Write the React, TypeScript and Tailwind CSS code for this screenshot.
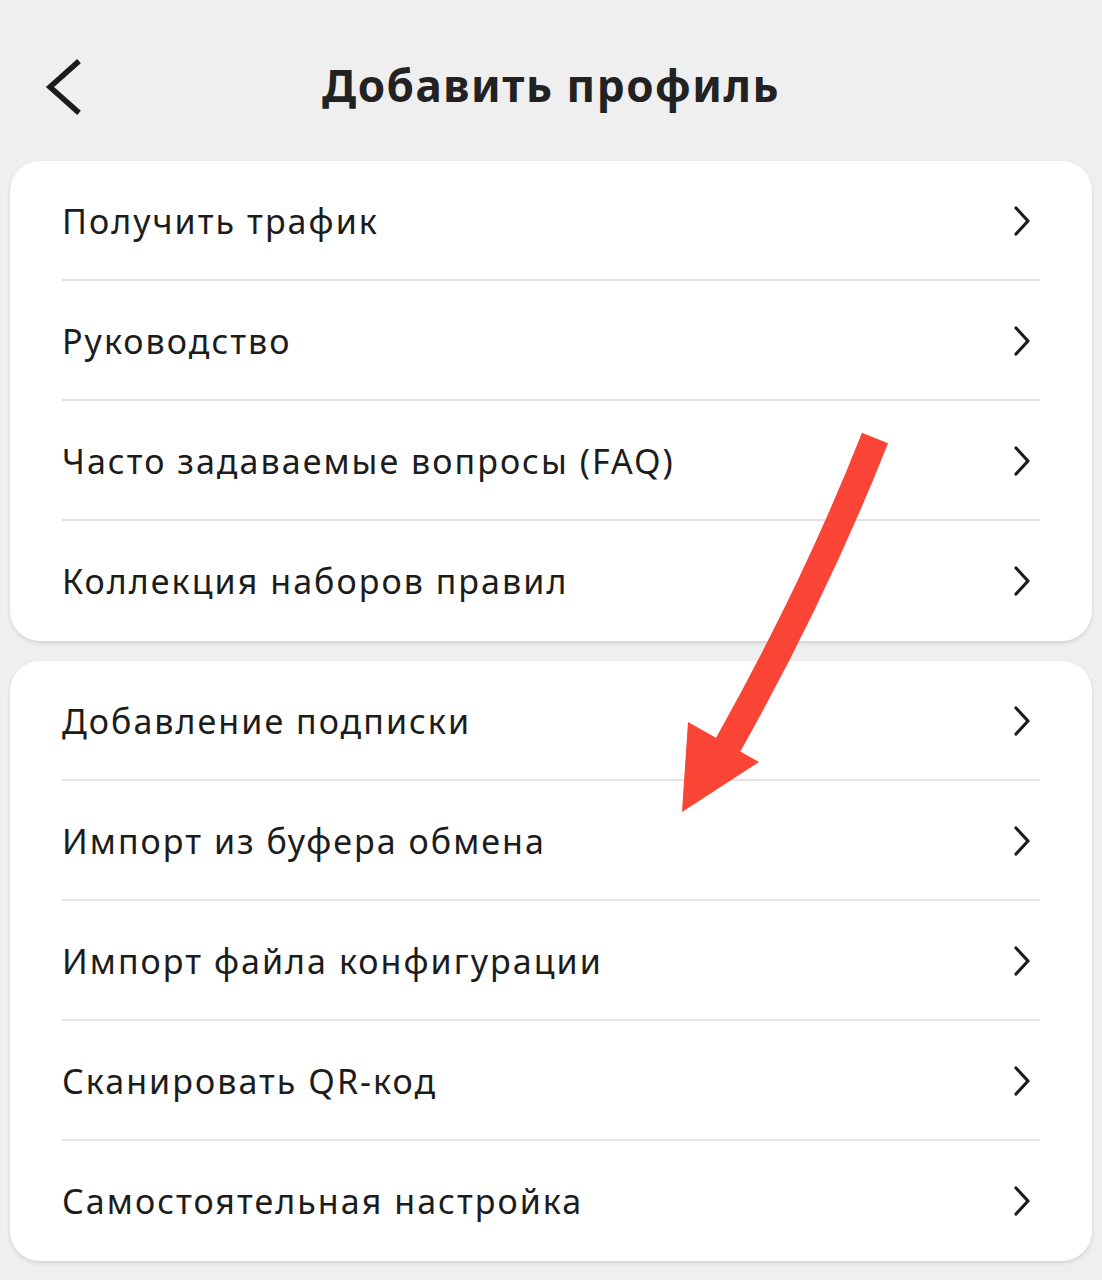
const groups = [
  ["Получить трафик", "Руководство", "Часто задаваемые вопросы (FAQ)", "Коллекция наборов правил"],
  [
    "Добавление подписки",
    "Импорт из буфера обмена",
    "Импорт файла конфигурации",
    "Сканировать QR-код",
    "Самостоятельная настройка",
  ],
]

function Chevron() {
  return (
    <svg width="20" height="32" viewBox="0 0 20 32" className="mr-[8px] shrink-0" fill="none">
      <polyline points="4,3 16,16 4,29" stroke="#1c1c1c" strokeWidth="3.2" strokeLinecap="round" strokeLinejoin="round" />
    </svg>
  )
}

function Row({ label, last }: { label: string; last: boolean }) {
  return (
    <div className="relative flex h-[120px] items-center justify-between pl-[52px] pr-[52px]">
      <span className="text-[34px] tracking-[0.06em] text-[#1c1c1c]">{label}</span>
      <Chevron />
      {!last && <div className="absolute bottom-0 left-[52px] right-[52px] h-[2px] bg-[#e3e3e3]" />}
    </div>
  )
}

export default function App() {
  return (
    <div
      className="relative min-h-[1280px] w-[1102px] bg-[#efefef] px-[10px]"
      style={{ fontFamily: '"Noto Sans", "DejaVu Sans", sans-serif' }}
    >
      <header className="relative flex h-[161px] items-start justify-center pt-[63px]">
        <button type="button" className="absolute left-[27px] top-[58px]">
          <svg width="48" height="58" viewBox="0 0 48 58" fill="none">
            <polyline points="40,5 13,29 40,53" stroke="#1c1c1c" strokeWidth="5.5" strokeLinecap="square" />
          </svg>
        </button>
        <h1 className="text-[44px] font-bold leading-none tracking-[0.035em] text-[#222]">Добавить профиль</h1>
      </header>

      <div className="flex flex-col gap-[20px]">
        {groups.map((items, gi) => (
          <div key={gi} className="overflow-hidden rounded-[30px] bg-white shadow-[0_2px_4px_rgba(0,0,0,0.12)]">
            {items.map((label, i) => (
              <Row key={label} label={label} last={i === items.length - 1} />
            ))}
          </div>
        ))}
      </div>

      <svg className="pointer-events-none absolute left-0 top-0" width="1102" height="1280" viewBox="0 0 1102 1280">
        <path d="M875 438 Q815 590 728 745" fill="none" stroke="#fa4436" strokeWidth="28" />
        <polygon points="688,722 759,762 682,812" fill="#fa4436" />
      </svg>
    </div>
  )
}
